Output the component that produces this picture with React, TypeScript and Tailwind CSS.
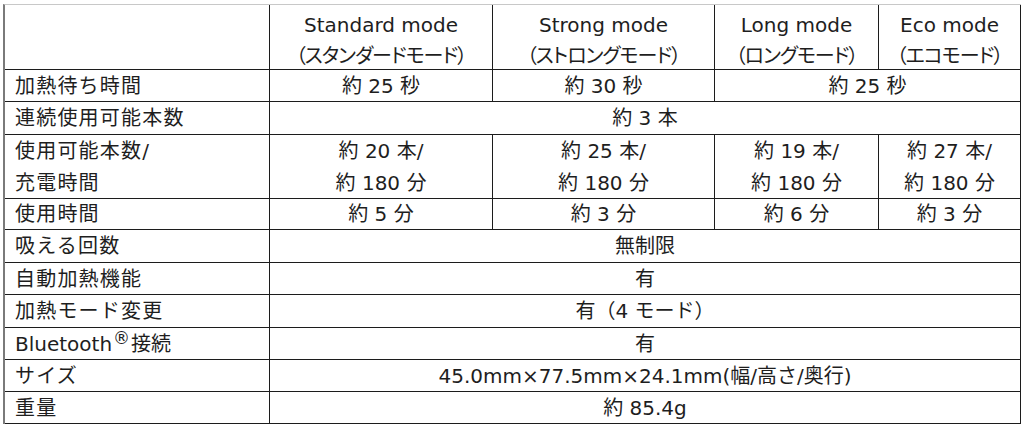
const modes = [
  { en: "Standard mode", ja: "（スタンダードモード）" },
  { en: "Strong mode", ja: "（ストロングモード）" },
  { en: "Long mode", ja: "（ロングモード）" },
  { en: "Eco mode", ja: "（エコモード）" },
];

const cell = "border-r border-b border-[#1c1c1c] flex items-center";
const label = `${cell} pl-[10px] tracking-[1.2px]`;
const value = `${cell} justify-center text-center`;

export default function App() {
  return (
    <div className="w-[1024px] h-[424px] bg-white pl-[3px] pt-[4px] text-[20px] text-[#1e1e1e] font-['DejaVu_Sans','Noto_Sans_CJK_JP',sans-serif]">
      <div className="w-[1018px] grid grid-cols-[265px_223px_222px_164px_142px] grid-rows-[65px_32px_33px_64px_31px_33px_32px_33px_32px_32px_32px] border-l-2 border-l-[#7a7a7a] border-t border-t-[#c8c8c8]">
        <div className={cell}></div>
        {modes.map((m) => (
          <div key={m.en} className={`${value} flex-col leading-[31px] pt-[7px]`}>
            <span>{m.en}</span>
            <span className="[font-feature-settings:'palt'] tracking-[-1px]">{m.ja}</span>
          </div>
        ))}

        <div className={label}>加熱待ち時間</div>
        <div className={value}>約 25 秒</div>
        <div className={value}>約 30 秒</div>
        <div className={`${value} col-span-2`}>約 25 秒</div>

        <div className={label}>連続使用可能本数</div>
        <div className={`${value} col-span-4`}>約 3 本</div>

        <div className={`${label} flex-col items-start justify-center leading-[32px]`}>
          <span>使用可能本数/</span>
          <span>充電時間</span>
        </div>
        {["20", "25", "19", "27"].map((n) => (
          <div key={n} className={`${value} flex-col leading-[32px]`}>
            <span>約 {n} 本/</span>
            <span>約 180 分</span>
          </div>
        ))}

        <div className={label}>使用時間</div>
        <div className={value}>約 5 分</div>
        <div className={value}>約 3 分</div>
        <div className={value}>約 6 分</div>
        <div className={value}>約 3 分</div>

        <div className={label}>吸える回数</div>
        <div className={`${value} col-span-4`}>無制限</div>

        <div className={label}>自動加熱機能</div>
        <div className={`${value} col-span-4`}>有</div>

        <div className={label}>加熱モード変更</div>
        <div className={`${value} col-span-4`}>有（4 モード）</div>

        <div className={`${label} tracking-normal`}>
          Bluetooth<sup className="text-[17px] -top-[0.35em] mx-[1px]">®</sup>接続
        </div>
        <div className={`${value} col-span-4`}>有</div>

        <div className={label}>サイズ</div>
        <div className={`${value} col-span-4`}>45.0mm×77.5mm×24.1mm(幅/高さ/奥行)</div>

        <div className={label}>重量</div>
        <div className={`${value} col-span-4`}>約 85.4g</div>
      </div>
    </div>
  );
}
